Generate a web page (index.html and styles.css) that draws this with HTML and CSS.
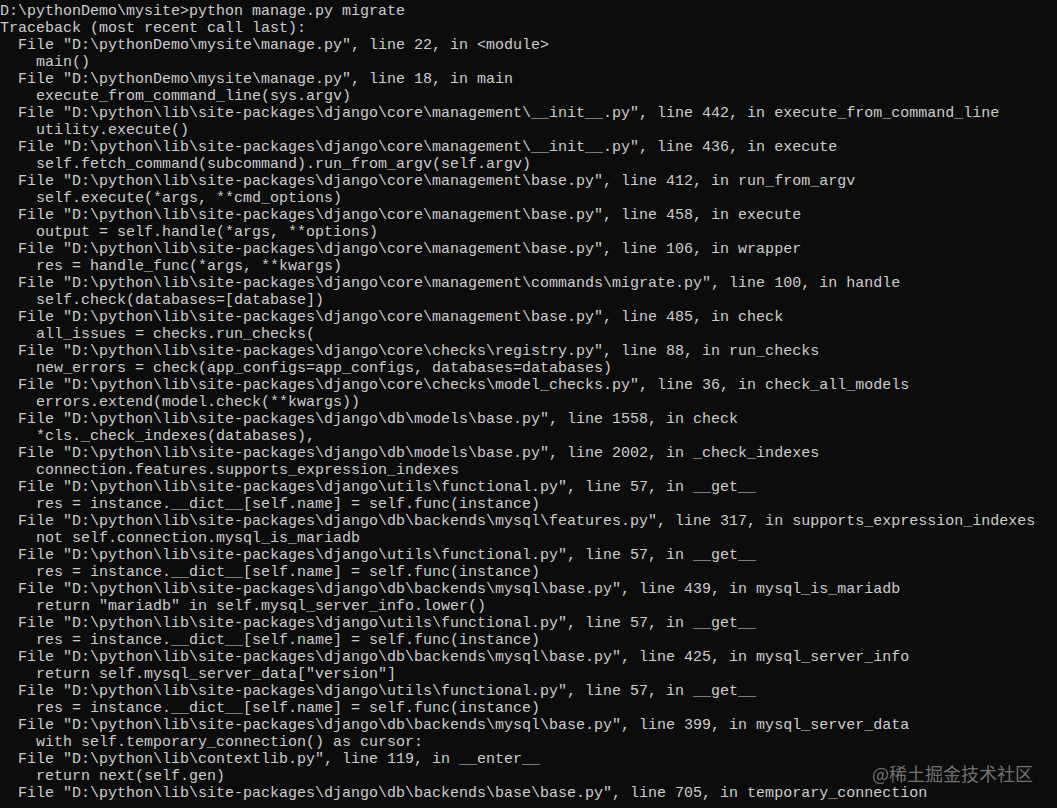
FILE: index.html
```html
<!DOCTYPE html>
<html lang="en">
<head>
<meta charset="utf-8">
<title>Console</title>
<link rel="stylesheet" href="styles.css">
</head>
<body>
<main class="console">
<pre class="output">D:\pythonDemo\mysite&gt;python manage.py migrate
Traceback (most recent call last):
  File "D:\pythonDemo\mysite\manage.py", line 22, in &lt;module&gt;
    main()
  File "D:\pythonDemo\mysite\manage.py", line 18, in main
    execute_from_command_line(sys.argv)
  File "D:\python\lib\site-packages\django\core\management\__init__.py", line 442, in execute_from_command_line
    utility.execute()
  File "D:\python\lib\site-packages\django\core\management\__init__.py", line 436, in execute
    self.fetch_command(subcommand).run_from_argv(self.argv)
  File "D:\python\lib\site-packages\django\core\management\base.py", line 412, in run_from_argv
    self.execute(*args, **cmd_options)
  File "D:\python\lib\site-packages\django\core\management\base.py", line 458, in execute
    output = self.handle(*args, **options)
  File "D:\python\lib\site-packages\django\core\management\base.py", line 106, in wrapper
    res = handle_func(*args, **kwargs)
  File "D:\python\lib\site-packages\django\core\management\commands\migrate.py", line 100, in handle
    self.check(databases=[database])
  File "D:\python\lib\site-packages\django\core\management\base.py", line 485, in check
    all_issues = checks.run_checks(
  File "D:\python\lib\site-packages\django\core\checks\registry.py", line 88, in run_checks
    new_errors = check(app_configs=app_configs, databases=databases)
  File "D:\python\lib\site-packages\django\core\checks\model_checks.py", line 36, in check_all_models
    errors.extend(model.check(**kwargs))
  File "D:\python\lib\site-packages\django\db\models\base.py", line 1558, in check
    *cls._check_indexes(databases),
  File "D:\python\lib\site-packages\django\db\models\base.py", line 2002, in _check_indexes
    connection.features.supports_expression_indexes
  File "D:\python\lib\site-packages\django\utils\functional.py", line 57, in __get__
    res = instance.__dict__[self.name] = self.func(instance)
  File "D:\python\lib\site-packages\django\db\backends\mysql\features.py", line 317, in supports_expression_indexes
    not self.connection.mysql_is_mariadb
  File "D:\python\lib\site-packages\django\utils\functional.py", line 57, in __get__
    res = instance.__dict__[self.name] = self.func(instance)
  File "D:\python\lib\site-packages\django\db\backends\mysql\base.py", line 439, in mysql_is_mariadb
    return "mariadb" in self.mysql_server_info.lower()
  File "D:\python\lib\site-packages\django\utils\functional.py", line 57, in __get__
    res = instance.__dict__[self.name] = self.func(instance)
  File "D:\python\lib\site-packages\django\db\backends\mysql\base.py", line 425, in mysql_server_info
    return self.mysql_server_data["version"]
  File "D:\python\lib\site-packages\django\utils\functional.py", line 57, in __get__
    res = instance.__dict__[self.name] = self.func(instance)
  File "D:\python\lib\site-packages\django\db\backends\mysql\base.py", line 399, in mysql_server_data
    with self.temporary_connection() as cursor:
  File "D:\python\lib\contextlib.py", line 119, in __enter__
    return next(self.gen)
  File "D:\python\lib\site-packages\django\db\backends\base\base.py", line 705, in temporary_connection</pre>
<div class="watermark">@稀土掘金技术社区</div>
</main>
</body>
</html>
```
FILE: styles.css
```css
html, body {
  margin: 0;
  padding: 0;
  background: #0c0c0c;
  height: 100%;
  overflow: hidden;
}

.console {
  position: relative;
  width: 1057px;
  height: 808px;
  background: #0c0c0c;
  overflow: hidden;
}

.output {
  margin: 0;
  padding: 3px 0 0 0;
  font-family: "Liberation Mono", "DejaVu Sans Mono", monospace;
  font-size: 15px;
  line-height: 17px;
  color: #cccccc;
  white-space: pre;
}

.watermark {
  position: absolute;
  right: 24px;
  top: 764px;
  font-family: "Noto Sans CJK SC", "Noto Sans", sans-serif;
  font-size: 18px;
  line-height: 19px;
  color: rgba(140, 140, 140, 0.8);
}
```
